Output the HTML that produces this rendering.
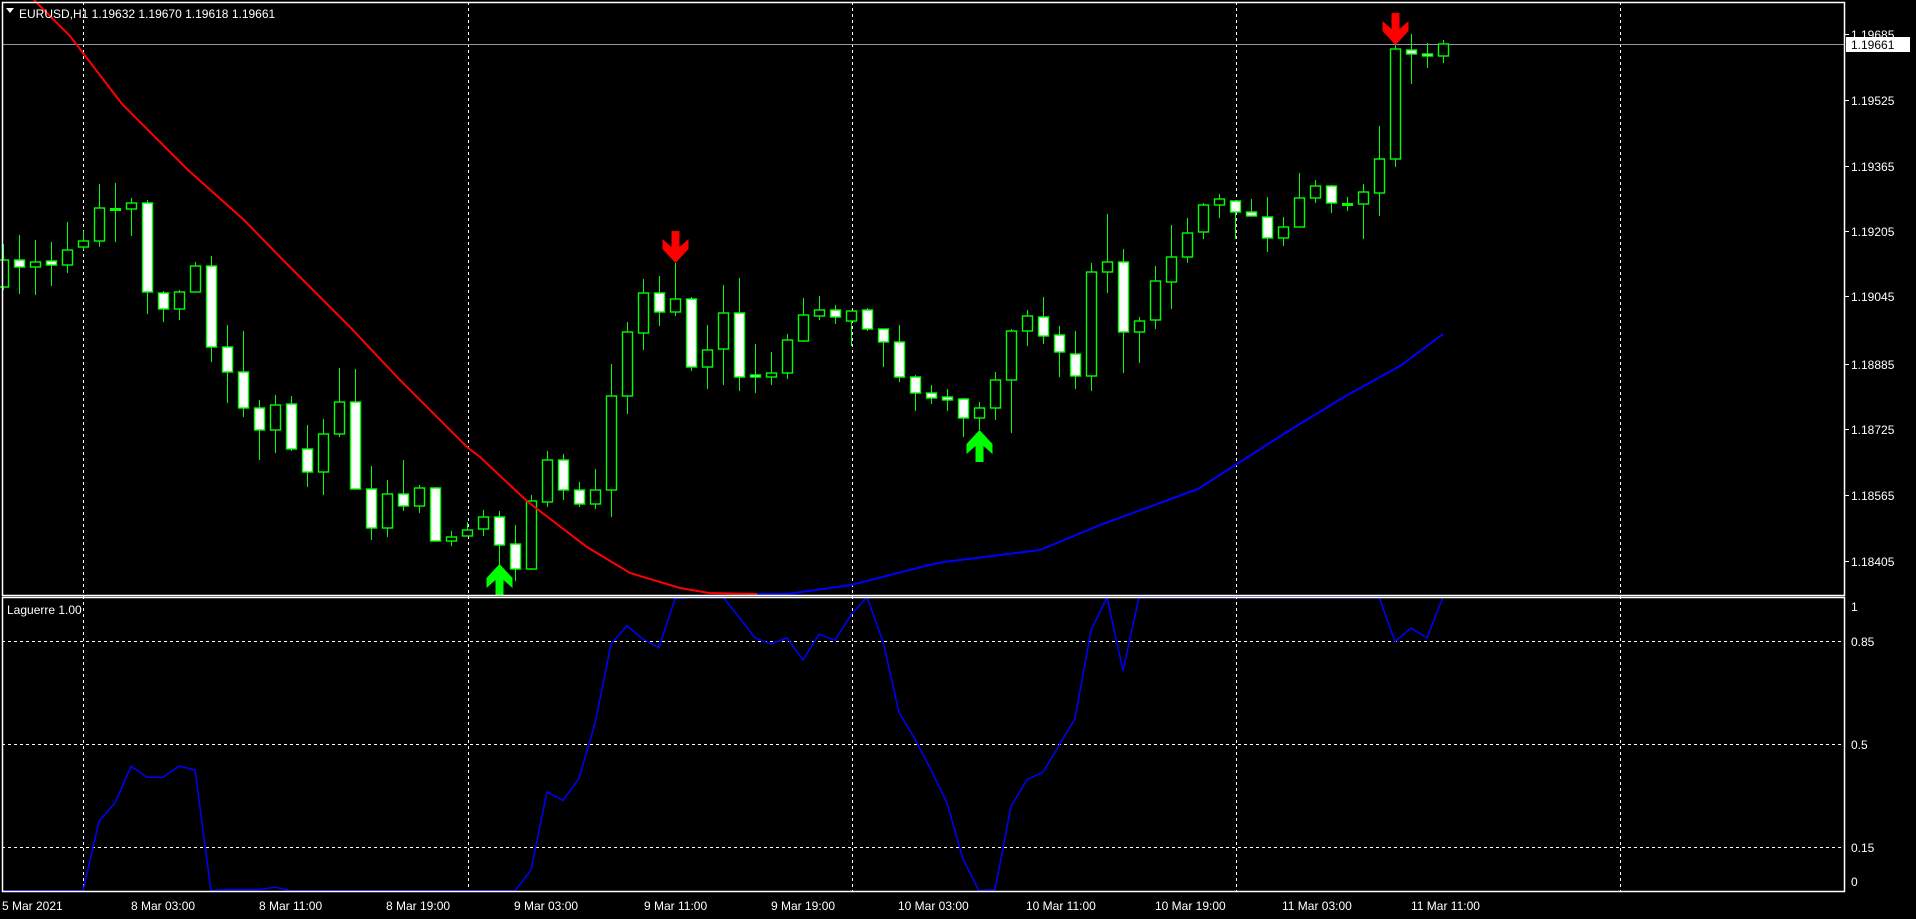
<!DOCTYPE html>
<html><head><meta charset="utf-8"><style>
html,body{margin:0;padding:0;background:#000;width:1916px;height:919px;overflow:hidden}
svg{display:block}
text{font-family:"Liberation Sans",sans-serif;font-size:12px;fill:#fff}
</style></head><body>
<svg id="s" width="1916" height="919" viewBox="0 0 1916 919" xmlns="http://www.w3.org/2000/svg">
<rect width="1916" height="919" fill="#000"/>
<g stroke="#fff" stroke-width="1" stroke-dasharray="3,3" fill="none">
<line x1="83.5" y1="2" x2="83.5" y2="892"/>
<line x1="468.5" y1="2" x2="468.5" y2="892"/>
<line x1="852.5" y1="2" x2="852.5" y2="892"/>
<line x1="1236.5" y1="2" x2="1236.5" y2="892"/>
<line x1="1620.5" y1="2" x2="1620.5" y2="892"/>
<line x1="2" y1="641.5" x2="1844" y2="641.5"/>
<line x1="2" y1="744.5" x2="1844" y2="744.5"/>
<line x1="2" y1="847.5" x2="1844" y2="847.5"/>
</g>
<line x1="2" y1="44.5" x2="1844" y2="44.5" stroke="#8a9aa8" stroke-width="1"/>
<g id="candles"></g>
<polyline id="ma" fill="none" stroke="#ff0000" stroke-width="2" points="34,0 70,36 122,104 188,170 244,220 283,260 348,325 400,380 467,447 480,457 528,502 587,547 630,573 680,588 709,593 757,594"/>
<polyline fill="none" stroke="#0000ff" stroke-width="2" points="757,594 787,594 851,585 929,565 944,562 1040,550 1100,525 1198,489 1290,430 1344,397 1400,366 1443,334"/>
<g id="arrows"></g>
<polyline id="lag" fill="none" stroke="#0000ff" stroke-width="1.5" points=""/>
<g fill="none" stroke="#fff" stroke-width="1.5">
<rect x="2.5" y="2.5" width="1842" height="593"/>
<rect x="2.5" y="597.5" width="1842" height="294"/>
</g>
<g stroke="#fff" stroke-width="1">
<line x1="1845" y1="34.5" x2="1849" y2="34.5"/><line x1="1845" y1="100.5" x2="1849" y2="100.5"/>
<line x1="1845" y1="166.5" x2="1849" y2="166.5"/><line x1="1845" y1="231.5" x2="1849" y2="231.5"/>
<line x1="1845" y1="296.5" x2="1849" y2="296.5"/><line x1="1845" y1="364.5" x2="1849" y2="364.5"/>
<line x1="1845" y1="429.5" x2="1849" y2="429.5"/><line x1="1845" y1="495.5" x2="1849" y2="495.5"/>
<line x1="1845" y1="561.5" x2="1849" y2="561.5"/>
</g>
<text x="1851" y="39">1.19685</text>
<text x="1851" y="105">1.19525</text>
<text x="1851" y="171">1.19365</text>
<text x="1851" y="236">1.19205</text>
<text x="1851" y="301">1.19045</text>
<text x="1851" y="369">1.18885</text>
<text x="1851" y="434">1.18725</text>
<text x="1851" y="500">1.18565</text>
<text x="1851" y="566">1.18405</text>
<rect x="1846" y="37" width="64" height="15" fill="#fff"/>
<text x="1851" y="49" style="fill:#000">1.19661</text>
<text x="1851" y="611">1</text>
<text x="1851" y="646">0.85</text>
<text x="1851" y="749">0.5</text>
<text x="1851" y="852">0.15</text>
<text x="1851" y="886">0</text>
<polygon points="6,8 14,8 10,13" fill="#fff"/>
<text x="19" y="18">EURUSD,H1  1.19632 1.19670 1.19618 1.19661</text>
<text x="7" y="614">Laguerre 1.00</text>
<text x="2" y="910">5 Mar 2021</text>
<text x="131" y="910">8 Mar 03:00</text>
<text x="259" y="910">8 Mar 11:00</text>
<text x="386" y="910">8 Mar 19:00</text>
<text x="514" y="910">9 Mar 03:00</text>
<text x="644" y="910">9 Mar 11:00</text>
<text x="771" y="910">9 Mar 19:00</text>
<text x="898" y="910">10 Mar 03:00</text>
<text x="1026" y="910">10 Mar 11:00</text>
<text x="1155" y="910">10 Mar 19:00</text>
<text x="1282" y="910">11 Mar 03:00</text>
<text x="1411" y="910">11 Mar 11:00</text>
</svg>
<script>
var D=[[260,287,244,290,0],[260,267,235,294,1],[262,267,240,295,0],[261,265,242,286,1],[250,265,222,273,0],[241,247,231,250,0],[208,241,184,247,0],[209,209,183,242,0],[203,209,198,236,0],[203,292,200,314,1],
[293,309,291,322,1],[292,309,290,320,0],[266,292,262,292,0],[266,347,256,362,1],[347,372,325,403,1],[372,408,331,417,1],[408,430,400,460,1],[405,430,395,453,0],[404,449,396,451,1],[449,472,425,487,1],
[434,472,419,495,0],[402,434,368,437,0],[402,489,369,489,1],[489,528,466,540,1],[494,528,480,537,0],[494,506,460,511,1],[488,506,485,513,0],[488,541,487,541,1],[537,541,531,546,0],[530,536,522,536,0],
[517,529,510,536,0],[517,545,511,567,1],[544,569,525,581,1],[501,569,495,570,0],[460,502,451,507,0],[460,490,454,500,1],[490,504,482,507,1],[490,504,469,509,0],[396,490,364,517,0],[332,396,322,414,0],
[293,333,279,350,0],[293,312,276,326,1],[299,312,263,316,0],[299,367,297,371,1],[350,367,325,389,0],[313,349,285,385,0],[313,377,278,391,1],[375,377,344,393,1],[373,377,352,385,0],[340,373,334,379,0],
[315,341,298,342,0],[310,316,296,320,0],[310,317,305,324,1],[311,321,311,346,0],[310,329,308,331,1],[329,342,329,367,1],[342,377,325,382,1],[377,393,375,411,1],[393,398,385,404,1],[397,400,389,411,1],
[399,418,398,437,1],[408,418,402,430,0],[380,408,372,420,0],[331,380,329,433,0],[316,331,310,346,0],[317,336,297,344,1],[335,352,326,377,1],[354,376,331,389,1],[272,376,263,391,0],[262,272,214,293,0],
[262,332,249,373,1],[321,332,317,363,0],[281,320,266,329,0],[257,282,225,309,0],[233,257,218,263,0],[205,232,203,239,0],[199,205,194,218,0],[201,212,201,239,1],[212,216,199,216,1],[217,238,197,252,1],
[227,238,217,246,0],[198,227,173,227,0],[186,198,180,203,0],[186,203,185,213,1],[204,204,197,211,1],[192,204,184,239,0],[159,193,126,216,0],[49,159,45,167,0],[50,54,34,84,1],[54,56,43,68,1],[44,56,40,63,0]];
var ns="http://www.w3.org/2000/svg",g=document.getElementById("candles"),h="";
D.forEach(function(c,k){var x=3+16*k;
h+='<line x1="'+(x+.5)+'" y1="'+c[2]+'" x2="'+(x+.5)+'" y2="'+c[3]+'" stroke="#00ff00" stroke-width="1"/>';
if(c[1]-c[0]<2){h+='<rect x="'+(x-5)+'" y="'+(c[0]-1)+'" width="11" height="3" fill="#00ff00"/>';}
else h+='<rect x="'+(x-4.5)+'" y="'+c[0]+'" width="10" height="'+(c[1]-c[0])+'" fill="'+(c[4]?'#fff':'#000')+'" stroke="#00ff00" stroke-width="1.4"/>';});
g.innerHTML=h;
function arr(x,y,down,col){var p=[[-4,0],[4,0],[4,16],[13,8],[13,18],[0,32],[-13,18],[-13,8],[-4,16]];
return '<polygon fill="'+col+'" points="'+p.map(function(q){return (x+.5+q[0])+','+(down?y+q[1]:y+32-q[1]);}).join(' ')+'"/>';}
document.getElementById("arrows").innerHTML=arr(675,231,1,"#ff0000")+arr(1395,13,1,"#ff0000")+arr(499,564,0,"#00ff00")+arr(979,430,0,"#00ff00");
var L=[729,729,729,729,729,729,672,657,627,636,636,627,630,729,728,728,728,726,729,729,729,729,729,729,729,729,729,729,729,729,729,729,729,712,648,655,637,592,527,512,523,530,490,488,488,488,505,522,527,522,540,519,524,503,488,525,583,605,630,657,703,729,728,660,638,632,610,588,516,488,549,488,488,488,488,488,488,488,488,488,488,488,488,488,488,488,488,525,514,522,488];
document.getElementById("lag").setAttribute("points",L.map(function(v,k){var y=Math.min(891,Math.max(597,v*1.222));return (3+16*k)+','+y.toFixed(1);}).join(' '));
</script>
</body></html>
